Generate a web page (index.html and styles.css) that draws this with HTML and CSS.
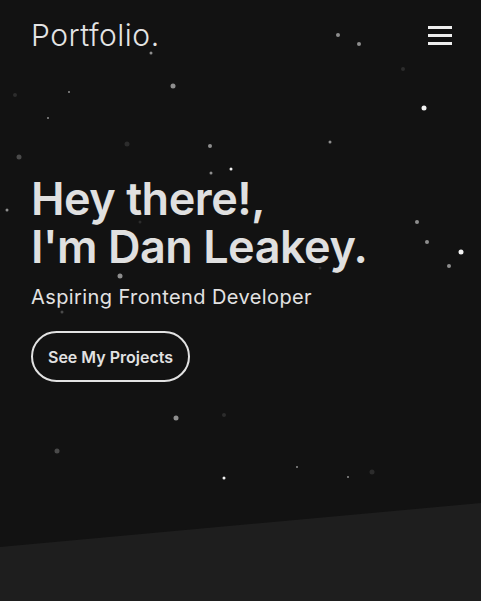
FILE: index.html
```html
<!DOCTYPE html>
<html lang="en">
<head>
<meta charset="utf-8">
<title>Portfolio</title>
<link rel="stylesheet" href="styles.css">
</head>
<body>
<section class="hero">
  <div class="particles">
    <span class="p s4 c2" style="left:338px;top:35px"></span>
    <span class="p s4 c2" style="left:359px;top:44px"></span>
    <span class="p s4 c4" style="left:403px;top:69px"></span>
    <span class="p s5 c1" style="left:424px;top:108px"></span>
    <span class="p s3 c2" style="left:151px;top:53px"></span>
    <span class="p s5 c2" style="left:173px;top:86px"></span>
    <span class="p s4 c2" style="left:210px;top:146px"></span>
    <span class="p s3 c2" style="left:330px;top:142px"></span>
    <span class="p s4 c4" style="left:15px;top:95px"></span>
    <span class="p s2 c2" style="left:69px;top:92px"></span>
    <span class="p s2 c2" style="left:48px;top:118px"></span>
    <span class="p s5 c4" style="left:127px;top:144px"></span>
    <span class="p s5 c3" style="left:19px;top:157px"></span>
    <span class="p s3 c1" style="left:231px;top:169px"></span>
    <span class="p s3 c2" style="left:211px;top:173px"></span>
    <span class="p s3 c2" style="left:7px;top:210px"></span>
    <span class="p s3 c4" style="left:140px;top:222px"></span>
    <span class="p s5 c2" style="left:120px;top:276px"></span>
    <span class="p s3 c4" style="left:320px;top:268px"></span>
    <span class="p s4 c2" style="left:417px;top:222px"></span>
    <span class="p s4 c2" style="left:427px;top:242px"></span>
    <span class="p s5 c1" style="left:461px;top:252px"></span>
    <span class="p s4 c2" style="left:449px;top:266px"></span>
    <span class="p s3 c3" style="left:62px;top:312px"></span>
    <span class="p s5 c2" style="left:176px;top:418px"></span>
    <span class="p s4 c4" style="left:224px;top:415px"></span>
    <span class="p s5 c3" style="left:57px;top:451px"></span>
    <span class="p s2 c2" style="left:297px;top:467px"></span>
    <span class="p s3 c1" style="left:224px;top:478px"></span>
    <span class="p s2 c2" style="left:348px;top:477px"></span>
    <span class="p s5 c4" style="left:372px;top:472px"></span>
  </div>
  <header class="nav">
    <a class="logo" href="#">Portfolio.</a>
    <button class="menu" aria-label="Menu">
      <span class="bar"></span><span class="bar"></span><span class="bar"></span>
    </button>
  </header>
  <div class="intro">
    <h1 class="title">Hey there!,<br>I'm Dan Leakey.</h1>
    <p class="subtitle">Aspiring Frontend Developer</p>
    <a class="cta" href="#">See My Projects</a>
  </div>
</section>
<section class="next"></section>
</body>
</html>
```

FILE: styles.css
```css
* { box-sizing: border-box; }
html, body { margin: 0; padding: 0; }
body {
  background: #1e1e1e;
  font-family: "Inter", "Open Sans", sans-serif;
  color: #e2e2e2;
  width: 481px;
  height: 601px;
  overflow: hidden;
}
.hero {
  position: relative;
  height: 547px;
  background: #121212;
  clip-path: polygon(0 0, 100% 0, 100% 503px, 0 547px);
}
.particles { position: absolute; inset: 0; pointer-events: none; }
.p {
  position: absolute;
  border-radius: 50%;
  transform: translate(-50%, -50%);
}
.s2 { width: 2px; height: 2px; }
.s3 { width: 3px; height: 3px; }
.s4 { width: 4px; height: 4px; }
.s5 { width: 5px; height: 5px; }
.c1 { background: #f2f2f2; }
.c2 { background: #8e8e8e; }
.c3 { background: #4a4a4a; }
.c4 { background: #2c2c2c; }

.nav {
  position: relative;
  display: flex;
  justify-content: space-between;
  align-items: center;
  padding: 15px 29px 0 31px;
}
.logo {
  color: #e4e4e4;
  text-decoration: none;
  font-size: 30px;
  font-weight: 300;
  line-height: 40px;
  letter-spacing: 0.5px;
}
.menu {
  display: flex;
  flex-direction: column;
  gap: 5px;
  padding: 0;
  border: 0;
  background: none;
}
.bar { width: 24px; height: 3px; background: #eeeeee; display: block; }

.intro {
  position: relative;
  padding: 120px 0 0 31px;
}
.title {
  margin: 0;
  font-size: 45px;
  font-weight: 600;
  line-height: 48px;
  letter-spacing: -0.5px;
  color: #e0e0e0;
}
.subtitle {
  margin: 13px 0 0;
  font-size: 20px;
  font-weight: 400;
  line-height: 26px;
  letter-spacing: 0.4px;
  color: #e2e2e2;
}
.cta {
  display: inline-flex;
  align-items: center;
  justify-content: center;
  margin-top: 21px;
  width: 159px;
  height: 51px;
  border: 2px solid #e2e2e2;
  border-radius: 26px;
  color: #e2e2e2;
  text-decoration: none;
  font-size: 16px;
  font-weight: 600;
  letter-spacing: 0;
}
.next { height: 54px; }
```
